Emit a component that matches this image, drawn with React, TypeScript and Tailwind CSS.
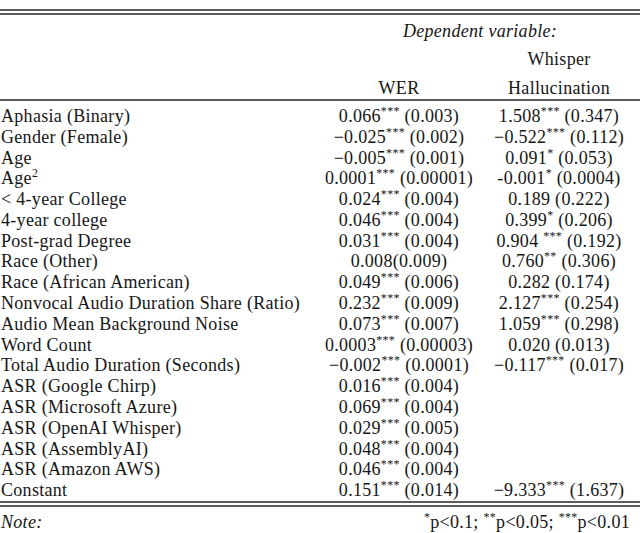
import React from 'react';

// one regression table, as typeset by stargazer
type Row = [string, string, string];

const rows: Row[] = [
  ['Aphasia (Binary)', '0.066^***^ (0.003)', '1.508^***^ (0.347)'],
  ['Gender (Female)', '\u22120.025^***^ (0.002)', '\u22120.522^***^ (0.112)'],
  ['Age', '\u22120.005^***^ (0.001)', '0.091^*^ (0.053)'],
  ['Age^2^', '0.0001^***^ (0.00001)', '-0.001^*^ (0.0004)'],
  ['< 4-year College', '0.024^***^ (0.004)', '0.189 (0.222)'],
  ['4-year college', '0.046^***^ (0.004)', '0.399^*^ (0.206)'],
  ['Post-grad Degree', '0.031^***^ (0.004)', '0.904 ^***^ (0.192)'],
  ['Race (Other)', '0.008(0.009)', '0.760^**^ (0.306)'],
  ['Race (African American)', '0.049^***^ (0.006)', '0.282 (0.174)'],
  ['Nonvocal Audio Duration Share (Ratio)', '0.232^***^ (0.009)', '2.127^***^ (0.254)'],
  ['Audio Mean Background Noise', '0.073^***^ (0.007)', '1.059^***^ (0.298)'],
  ['Word Count', '0.0003^***^ (0.00003)', '0.020 (0.013)'],
  ['Total Audio Duration (Seconds)', '\u22120.002^***^ (0.0001)', '\u22120.117^***^ (0.017)'],
  ['ASR (Google Chirp)', '0.016^***^ (0.004)', ''],
  ['ASR (Microsoft Azure)', '0.069^***^ (0.004)', ''],
  ['ASR (OpenAI Whisper)', '0.029^***^ (0.005)', ''],
  ['ASR (AssemblyAI)', '0.048^***^ (0.004)', ''],
  ['ASR (Amazon AWS)', '0.046^***^ (0.004)', ''],
  ['Constant', '0.151^***^ (0.014)', '\u22129.333^***^ (1.637)'],
];

// "a^b^c" -> a, superscript b, c
function Tex({ s }: { s: string }) {
  const parts = s.split('^');
  return (
    <span className="whitespace-pre">
      {parts.map((p, i) =>
        i % 2 === 1 ? (
          <sup key={i} className="text-[12px] top-[-7px]">
            {p}
          </sup>
        ) : (
          <span key={i}>{p}</span>
        )
      )}
    </span>
  );
}

function Rule() {
  return <div className="h-[2px] bg-[#5c5c5c]" />;
}

export default function App() {
  return (
    <div
      className="w-[640px] h-[533px] bg-white text-[#161616] text-[18px] tracking-[0.3px] overflow-hidden"
      style={{ fontFamily: '"Liberation Serif", serif' }}
    >
      <div className="pt-[9px]">
        <Rule />
        <div className="h-[2px]" />
        <Rule />
      </div>

      <div className="grid grid-cols-[1fr_158px_162px] pt-[2px]">
        <div className="h-[28px]" />
        <div className="col-span-2 h-[28px] flex items-center justify-center italic">
          Dependent variable:
        </div>
        <div className="h-[28px]" />
        <div className="h-[28px]" />
        <div className="h-[28px] flex items-center justify-center">Whisper</div>
        <div className="h-[26px]" />
        <div className="h-[26px] pt-[4px] leading-[22px] text-center">WER</div>
        <div className="h-[26px] pt-[4px] leading-[22px] text-center">Hallucination</div>
      </div>
      <Rule />

      <div className="grid grid-cols-[1fr_158px_162px] pt-[5px]">
        {rows.map(([label, a, b]) => (
          <React.Fragment key={label}>
            <div className="h-[20.8px] flex items-center pl-px">
              <Tex s={label} />
            </div>
            <div className="h-[20.8px] flex items-center justify-center">
              <Tex s={a} />
            </div>
            <div className="h-[20.8px] flex items-center justify-center">
              {b && <Tex s={b} />}
            </div>
          </React.Fragment>
        ))}
      </div>

      <div>
        <Rule />
        <div className="h-[2px]" />
        <Rule />
      </div>

      <div className="h-[30px] flex items-center justify-between pl-px pr-[10px]">
        <span className="italic">Note:</span>
        <Tex s="^*^p<0.1; ^**^p<0.05; ^***^p<0.01" />
      </div>
    </div>
  );
}
